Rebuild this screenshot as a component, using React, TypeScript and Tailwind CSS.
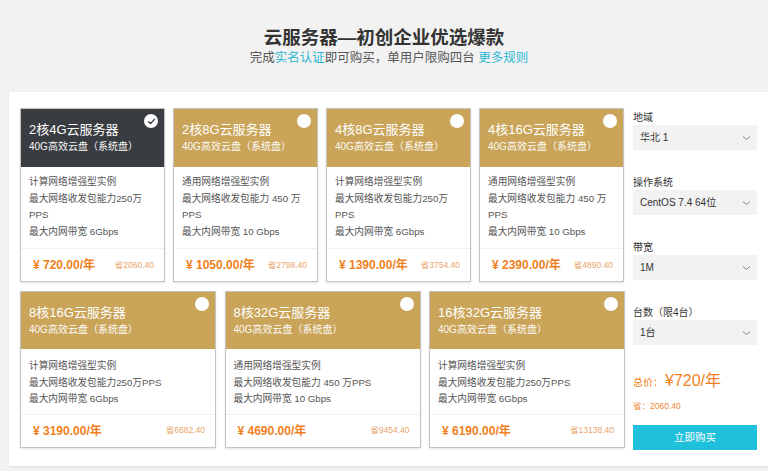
import React from "react";

type Card = {
  title: string;
  type: string;
  pps: string;
  bw: string;
  price: string;
  save: string;
  selected?: boolean;
};

const row1: Card[] = [
  { title: "2核4G云服务器", type: "计算网络增强型实例", pps: "最大网络收发包能力250万PPS", bw: "最大内网带宽 6Gbps", price: "720.00", save: "2060.40", selected: true },
  { title: "2核8G云服务器", type: "通用网络增强型实例", pps: "最大网络收发包能力 450 万PPS", bw: "最大内网带宽 10 Gbps", price: "1050.00", save: "2798.40" },
  { title: "4核8G云服务器", type: "计算网络增强型实例", pps: "最大网络收发包能力250万PPS", bw: "最大内网带宽 6Gbps", price: "1390.00", save: "3754.40" },
  { title: "4核16G云服务器", type: "通用网络增强型实例", pps: "最大网络收发包能力 450 万PPS", bw: "最大内网带宽 10 Gbps", price: "2390.00", save: "4890.40" },
];

const row2: Card[] = [
  { title: "8核16G云服务器", type: "计算网络增强型实例", pps: "最大网络收发包能力250万PPS", bw: "最大内网带宽 6Gbps", price: "3190.00", save: "6682.40" },
  { title: "8核32G云服务器", type: "通用网络增强型实例", pps: "最大网络收发包能力 450 万PPS", bw: "最大内网带宽 10 Gbps", price: "4690.00", save: "9454.40" },
  { title: "16核32G云服务器", type: "计算网络增强型实例", pps: "最大网络收发包能力250万PPS", bw: "最大内网带宽 6Gbps", price: "6190.00", save: "13138.40" },
];

function CardView({ c, w, head, body }: { c: Card; w: string; head: string; body: string }) {
  return (
    <div className={`${w} flex flex-col border border-[#c4c4c4] bg-white shadow-[0_1px_2px_rgba(0,0,0,0.12)]`}>
      <div className={`relative ${head} pl-[8px] pt-[11px] text-white ${c.selected ? "bg-[#393c41]" : "bg-[#caa458]"}`}>
        <div className="text-[13px] leading-[19px]">{c.title}</div>
        <div className="text-[10px] leading-[16px] opacity-95">40G高效云盘（系统盘）</div>
        <div className="absolute right-[6px] top-[5px] flex h-[14px] w-[14px] items-center justify-center rounded-full bg-white">
          {c.selected && (
            <svg width="9" height="9" viewBox="0 0 10 10" fill="none">
              <path d="M1.8 5.2 L4 7.3 L8.3 2.6" stroke="#393c41" strokeWidth="1.5" strokeLinecap="round" strokeLinejoin="round" />
            </svg>
          )}
        </div>
      </div>
      <div className={`flex-1 px-[8px] ${body} text-[9.7px] leading-[16.5px] text-[#555]`}>
        <div>{c.type}</div>
        <div>{c.pps}</div>
        <div>{c.bw}</div>
      </div>
      <div className="flex h-[33px] items-center justify-between border-t border-[#f0f0f0] pl-[12px] pr-[10px]">
        <span className="text-[12px] font-bold text-[#f17f22]">¥ {c.price}/年</span>
        <span className="text-[8.5px] text-[#e9a56b]">省{c.save}</span>
      </div>
    </div>
  );
}

function Chevron() {
  return (
    <svg width="9" height="6" viewBox="0 0 9 6" fill="none">
      <path d="M1 1.5 L4.5 4.5 L8 1.5" stroke="#777" strokeWidth="0.9" />
    </svg>
  );
}

function Select({ label, value, first }: { label: string; value: string; first?: boolean }) {
  return (
    <div className={first ? "" : "mt-[25px]"}>
      <div className="text-[10px] leading-[15px] text-[#333]">{label}</div>
      <div className="flex h-[25px] items-center justify-between bg-[#f2f2f2] pl-[7px] pr-[6px] text-[10px] text-[#333]">
        <span>{value}</span>
        <Chevron />
      </div>
    </div>
  );
}

export default function App() {
  return (
    <div
      className="min-h-[471px] w-[768px] overflow-hidden bg-[#f2f2f2]"
      style={{ fontFamily: '"Liberation Sans", "Noto Sans CJK SC", sans-serif' }}
    >
      <div className="flex flex-col items-center pt-[27px]">
        <div className="text-[18.5px] font-bold leading-[22px] text-[#333]">云服务器—初创企业优选爆款</div>
        <div className="ml-[10px] text-[12.5px] leading-[18px] text-[#555]">
          完成<span className="text-[#2bb8d6]">实名认证</span>即可购买，单用户限购四台 <span className="text-[#2bb8d6]">更多规则</span>
        </div>
      </div>
      <div className="ml-[9px] mt-[25px] flex bg-white pl-[11px] pt-[16px] pb-[16px] shadow-[0_1px_3px_rgba(0,0,0,0.08)]">
        <div className="flex w-[605px] flex-col gap-[9px]">
          <div className="flex gap-[8px]">
            {row1.map((c) => (
              <CardView key={c.title} c={c} w="w-[145px]" head="h-[58px]" body="pt-[7px] pb-[8px]" />
            ))}
          </div>
          <div className="flex gap-[8.5px]">
            {row2.map((c) => (
              <CardView key={c.title} c={c} w="w-[196px]" head="h-[57px]" body="pt-[9px] pb-[6px]" />
            ))}
          </div>
        </div>
        <div className="ml-[8px] flex w-[124px] flex-col pt-[2px]">
          <Select label="地域" value="华北 1" first />
          <Select label="操作系统" value="CentOS 7.4 64位" />
          <Select label="带宽" value="1M" />
          <Select label="台数（限4台）" value="1台" />
          <div className="mt-[26px] flex items-baseline text-[#f17f22]">
            <span className="text-[10px]">总价：</span>
            <span className="ml-[2px] text-[16px] leading-[20px]">¥720/年</span>
          </div>
          <div className="mt-[9px] text-[8.5px] leading-[12px] text-[#ef8a3a]">省：2060.40</div>
          <button className="mt-[13px] h-[25px] bg-[#1ec0dc] text-[10.5px] text-white">立即购买</button>
        </div>
      </div>
    </div>
  );
}
